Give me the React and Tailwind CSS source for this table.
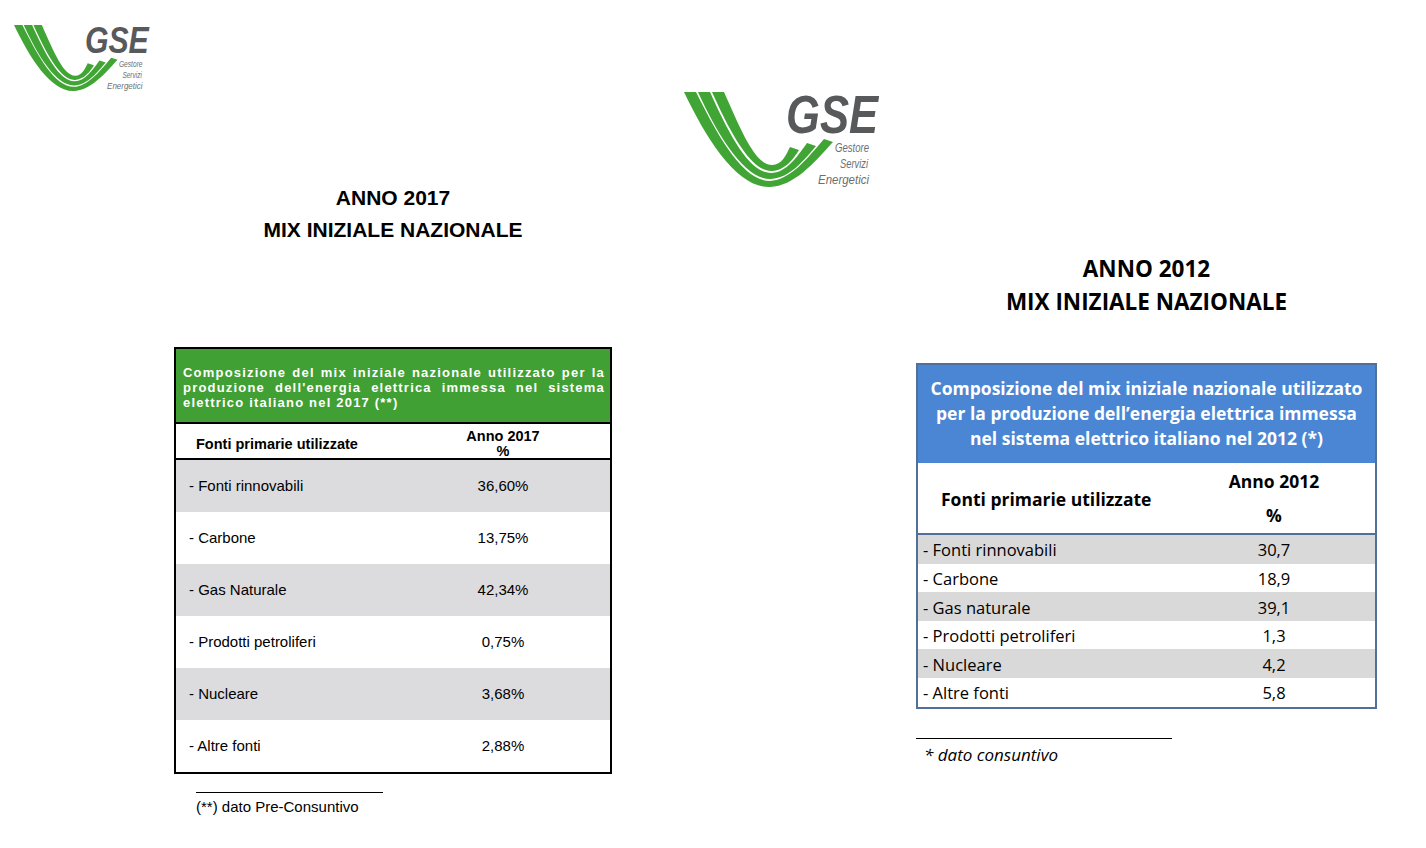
import React from "react";

function Logo({ className }) {
  const stripes = [
    "M -2 0 C 21 48, 51 96, 84 95 C 108 94, 127 72, 147 50 L 138 47 C 121 67, 104 88, 84 89 C 57 89, 33 46, 10 0 Z",
    "M 12 0 C 32 44, 59 88, 85 87 C 104 86, 118 68, 130 54 L 121 51 C 111 65, 100 81, 85 81 C 63 81, 43 42, 24 0 Z",
    "M 26 0 C 44 40, 65 80, 86 79 C 100 78, 108 66, 113 58 L 104 55 C 100 63, 96 73, 86 73 C 69 73, 55 38, 38 0 Z",
  ];
  return (
    <svg viewBox="0 0 196 95" className={className} overflow="visible">
      {stripes.map((d, i) => (
        <path key={i} d={d} fill="#41a535" />
      ))}
      <text
        x="100"
        y="41"
        fontFamily="Liberation Sans, sans-serif"
        fontWeight="bold"
        fontStyle="italic"
        fontSize="53"
        fill="#58595b"
        textLength="92"
        lengthAdjust="spacingAndGlyphs"
      >
        GSE
      </text>
      <text x="149" y="60" fontFamily="Liberation Sans, sans-serif" fontStyle="italic" fontSize="12" fill="#6d6e71" textLength="34" lengthAdjust="spacingAndGlyphs">
        Gestore
      </text>
      <text x="154" y="76" fontFamily="Liberation Sans, sans-serif" fontStyle="italic" fontSize="12" fill="#6d6e71" textLength="28" lengthAdjust="spacingAndGlyphs">
        Servizi
      </text>
      <text x="132" y="92" fontFamily="Liberation Sans, sans-serif" fontStyle="italic" fontSize="12" fill="#6d6e71" textLength="51" lengthAdjust="spacingAndGlyphs">
        Energetici
      </text>
    </svg>
  );
}

const rows2017 = [
  ["- Fonti rinnovabili", "36,60%"],
  ["- Carbone", "13,75%"],
  ["- Gas Naturale", "42,34%"],
  ["- Prodotti petroliferi", "0,75%"],
  ["- Nucleare", "3,68%"],
  ["- Altre fonti", "2,88%"],
];

const rows2012 = [
  ["- Fonti rinnovabili", "30,7"],
  ["- Carbone", "18,9"],
  ["- Gas naturale", "39,1"],
  ["- Prodotti petroliferi", "1,3"],
  ["- Nucleare", "4,2"],
  ["- Altre fonti", "5,8"],
];

export default function App() {
  return (
    <div className="w-[1426px] h-[848px] bg-white flex overflow-hidden text-black">
      {/* Left document */}
      <div className="w-[686px] shrink-0 pt-[25px] pl-[15px] font-['Liberation_Sans',Arial,sans-serif]">
        <Logo className="w-[137px] h-[66px] block" />
        <div className="ml-[159px] w-[438px]">
          <div className="mt-[91px] text-center font-bold text-[21px] leading-[32px]">
            <div>ANNO 2017</div>
            <div>MIX INIZIALE NAZIONALE</div>
          </div>
          <div className="mt-[101px] border-2 border-black">
            <div className="bg-[#40a033] text-white font-bold text-[13px] leading-[15px] tracking-[1.2px] pl-[7px] pr-[5px] pt-[16px] pb-[12px] text-justify [text-align-last:left]">
              Composizione del mix iniziale nazionale utilizzato per la produzione dell'energia elettrica immessa nel sistema elettrico italiano nel 2017 (**)
            </div>
            <div className="border-t-2 border-b-2 border-black h-[38px] flex items-center font-bold text-[14.5px]">
              <div className="w-[220px] pl-[20px] pt-[7px]">Fonti primarie utilizzate</div>
              <div className="flex-1 text-center leading-[15px] pt-[5px]">
                <div>Anno 2017</div>
                <div>%</div>
              </div>
            </div>
            {rows2017.map(([label, val], i) => (
              <div
                key={label}
                className={`h-[52px] flex items-center text-[15px] ${i % 2 === 0 ? "bg-[#dcdcde]" : "bg-white"}`}
              >
                <div className="w-[220px] pl-[13px]">{label}</div>
                <div className="flex-1 text-center">{val}</div>
              </div>
            ))}
          </div>
          <div className="ml-[22px] mt-[18px] w-[187px] border-t border-black"></div>
          <div className="ml-[22px] mt-[5px] text-[15px] leading-[18px]">(**) dato Pre-Consuntivo</div>
        </div>
      </div>

      {/* Right document */}
      <div className="flex-1 pt-[92px] font-['Open_Sans',sans-serif]">
        <Logo className="w-[196px] h-[95px] block" />
        <div className="ml-[230px] w-[461px]">
          <div className="mt-[65px] text-center font-bold text-[22.5px] leading-[33px]">
            <div>ANNO 2012</div>
            <div>MIX INIZIALE NAZIONALE</div>
          </div>
          <div className="mt-[45px] border-2 border-[#50709a]">
            <div className="bg-[#4a86d4] text-white font-bold text-[17.5px] leading-[25px] text-center pt-[11px] pb-[12px]">
              <div className="whitespace-nowrap">Composizione del mix iniziale nazionale utilizzato</div>
              <div className="whitespace-nowrap">per la produzione dell’energia elettrica immessa</div>
              <div className="whitespace-nowrap">nel sistema elettrico italiano nel 2012 (*)</div>
            </div>
            <div className="h-[72px] flex items-center font-bold text-[17.5px] border-b-2 border-[#50709a]">
              <div className="w-[255px] pl-[23px] pt-[2px] whitespace-nowrap">Fonti primarie utilizzate</div>
              <div className="flex-1 text-center leading-[34px]">
                <div>Anno 2012</div>
                <div>%</div>
              </div>
            </div>
            {rows2012.map(([label, val], i) => (
              <div
                key={label}
                className={`h-[28.6px] flex items-center text-[16.5px] pt-[3px] ${i % 2 === 0 ? "bg-[#d9d9d9]" : "bg-white"}`}
              >
                <div className="w-[255px] pl-[5px]">{label}</div>
                <div className="flex-1 text-center">{val}</div>
              </div>
            ))}
          </div>
          <div className="mt-[29px] w-[256px] border-t border-black"></div>
          <div className="mt-[6px] pl-[8px] italic text-[17px] leading-[20px]">* dato consuntivo</div>
        </div>
      </div>
    </div>
  );
}
